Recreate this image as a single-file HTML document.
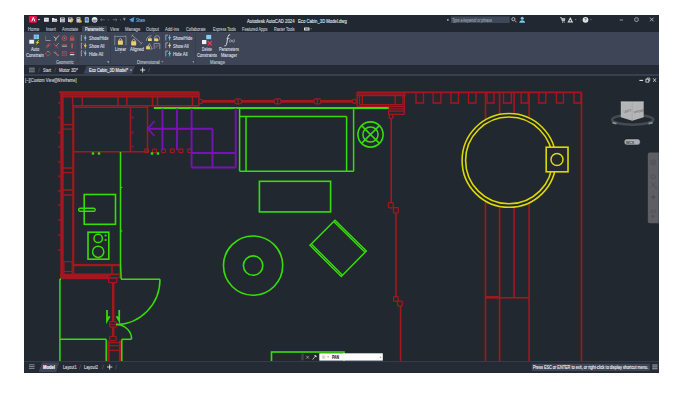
<!DOCTYPE html>
<html><head><meta charset="utf-8">
<style>
*{margin:0;padding:0;box-sizing:border-box}
html,body{width:680px;height:400px;background:#fff;overflow:hidden;font-family:"Liberation Sans",sans-serif}
.b{position:absolute}
.t{position:absolute;white-space:nowrap;line-height:1;transform-origin:0 0;-webkit-text-stroke:0.12px currentColor;font-family:"Liberation Sans",sans-serif}
svg{position:absolute;left:0;top:0;overflow:hidden}
</style></head><body>
<div class="b" style="left:24px;top:15px;width:635px;height:358px;background:#222832"></div>
<div class="b" style="left:24px;top:32px;width:635px;height:33px;background:#3d4556"></div>
<div class="b" style="left:82px;top:25.8px;width:25px;height:6.2px;background:#3c4454"></div>
<div class="b" style="left:24px;top:65px;width:635px;height:9px;background:#252b35"></div>
<div class="b" style="left:24px;top:74px;width:635px;height:1.8px;background:#384050"></div>
<div class="b" style="left:24px;top:75.8px;width:635px;height:285.2px;background:#212830"></div>
<div class="b" style="left:24px;top:361px;width:635px;height:1px;background:#343d4b"></div>
<div class="b" style="left:24px;top:362px;width:635px;height:11px;background:#252b35"></div>

<svg width="680" height="400" viewBox="0 0 680 400">
<defs><clipPath id="vpc"><rect x="24" y="75.2" width="635" height="285.8"/></clipPath></defs>
<g clip-path="url(#vpc)" stroke-linecap="butt">
<rect x="60.3" y="91.6" width="138.6" height="5.1" fill="#841a1f"/>
<line x1="59" y1="92" x2="199" y2="92" stroke="#a3181e" stroke-width="1.75"/>
<line x1="61" y1="94.2" x2="199" y2="94.2" stroke="#a3181e" stroke-width="1.25"/>
<line x1="61" y1="96.6" x2="199" y2="96.6" stroke="#a3181e" stroke-width="1.62"/>
<rect x="60.3" y="92" width="3.4" height="187" fill="#a3181e"/>
<rect x="72.2" y="106" width="2.1" height="158.5" fill="#a3181e"/>
<line x1="72.6" y1="96.6" x2="72.6" y2="106" stroke="#a3181e" stroke-width="1.50"/>
<line x1="82.3" y1="96.6" x2="82.3" y2="106" stroke="#a3181e" stroke-width="1.50"/>
<line x1="118" y1="96.6" x2="118" y2="106" stroke="#a3181e" stroke-width="1.50"/>
<line x1="126.8" y1="96.6" x2="126.8" y2="106" stroke="#a3181e" stroke-width="1.50"/>
<line x1="152.5" y1="96.6" x2="152.5" y2="106" stroke="#a3181e" stroke-width="1.50"/>
<line x1="157.5" y1="96.6" x2="157.5" y2="106" stroke="#a3181e" stroke-width="1.50"/>
<line x1="192.5" y1="96.6" x2="192.5" y2="106" stroke="#a3181e" stroke-width="1.50"/>
<line x1="199" y1="92" x2="199" y2="106" stroke="#a3181e" stroke-width="1.50"/>
<line x1="72.8" y1="105.8" x2="199" y2="105.8" stroke="#a3181e" stroke-width="1.50"/>
<line x1="74.4" y1="107.4" x2="147.5" y2="107.4" stroke="#a3181e" stroke-width="1.38"/>
<line x1="63" y1="124.6" x2="73.5" y2="124.6" stroke="#a3181e" stroke-width="1.38"/>
<line x1="63" y1="129.1" x2="73.5" y2="129.1" stroke="#a3181e" stroke-width="1.38"/>
<line x1="63" y1="168" x2="73.5" y2="168" stroke="#a3181e" stroke-width="1.38"/>
<line x1="63" y1="172.6" x2="73.5" y2="172.6" stroke="#a3181e" stroke-width="1.38"/>
<line x1="63" y1="190" x2="73.5" y2="190" stroke="#a3181e" stroke-width="1.38"/>
<line x1="63" y1="195" x2="73.5" y2="195" stroke="#a3181e" stroke-width="1.38"/>
<line x1="130.5" y1="107" x2="130.5" y2="152" stroke="#a3181e" stroke-width="1.50"/>
<line x1="147.5" y1="106" x2="147.5" y2="152" stroke="#a3181e" stroke-width="1.50"/>
<line x1="73.5" y1="151.7" x2="147.5" y2="151.7" stroke="#a3181e" stroke-width="1.50"/>
<rect x="144.6" y="149.2" width="4.0" height="3.4000000000000057" rx="0.8" fill="none" stroke="#a3181e" stroke-width="1.25"/>
<rect x="152.6" y="149.2" width="4.0" height="3.4000000000000057" rx="0.8" fill="none" stroke="#a3181e" stroke-width="1.25"/>
<rect x="161.5" y="149.2" width="4.0" height="3.4000000000000057" rx="0.8" fill="none" stroke="#a3181e" stroke-width="1.25"/>
<rect x="170.3" y="149.2" width="4.0" height="3.4000000000000057" rx="0.8" fill="none" stroke="#a3181e" stroke-width="1.25"/>
<rect x="178.9" y="149.2" width="4.0" height="3.4000000000000057" rx="0.8" fill="none" stroke="#a3181e" stroke-width="1.25"/>
<rect x="187.7" y="149.2" width="4.0" height="3.4000000000000057" rx="0.8" fill="none" stroke="#a3181e" stroke-width="1.25"/>
<rect x="58.7" y="102.4" width="1.2999999999999972" height="1.1999999999999886" rx="0" fill="none" stroke="#a3181e" stroke-width="0.75"/>
<rect x="58.7" y="116.9" width="1.2999999999999972" height="1.1999999999999886" rx="0" fill="none" stroke="#a3181e" stroke-width="0.75"/>
<rect x="58.7" y="131.9" width="1.2999999999999972" height="1.1999999999999886" rx="0" fill="none" stroke="#a3181e" stroke-width="0.75"/>
<rect x="58.7" y="146.1" width="1.2999999999999972" height="1.1999999999999886" rx="0" fill="none" stroke="#a3181e" stroke-width="0.75"/>
<rect x="58.7" y="161.20000000000002" width="1.2999999999999972" height="1.1999999999999886" rx="0" fill="none" stroke="#a3181e" stroke-width="0.75"/>
<rect x="58.7" y="175.8" width="1.2999999999999972" height="1.1999999999999886" rx="0" fill="none" stroke="#a3181e" stroke-width="0.75"/>
<rect x="58.7" y="190.4" width="1.2999999999999972" height="1.1999999999999886" rx="0" fill="none" stroke="#a3181e" stroke-width="0.75"/>
<rect x="58.7" y="204.4" width="1.2999999999999972" height="1.1999999999999886" rx="0" fill="none" stroke="#a3181e" stroke-width="0.75"/>
<rect x="58.7" y="219.4" width="1.2999999999999972" height="1.1999999999999886" rx="0" fill="none" stroke="#a3181e" stroke-width="0.75"/>
<rect x="58.7" y="234.4" width="1.2999999999999972" height="1.1999999999999886" rx="0" fill="none" stroke="#a3181e" stroke-width="0.75"/>
<rect x="58.7" y="249.4" width="1.2999999999999972" height="1.1999999999999886" rx="0" fill="none" stroke="#a3181e" stroke-width="0.75"/>
<rect x="132" y="116.9" width="1.1999999999999886" height="1.1999999999999886" rx="0" fill="none" stroke="#a3181e" stroke-width="0.75"/>
<rect x="132" y="131.9" width="1.1999999999999886" height="1.1999999999999886" rx="0" fill="none" stroke="#a3181e" stroke-width="0.75"/>
<rect x="132" y="145.9" width="1.1999999999999886" height="1.1999999999999886" rx="0" fill="none" stroke="#a3181e" stroke-width="0.75"/>
<rect x="72.2" y="263.9" width="48.5" height="2.3" fill="#a3181e"/>
<rect x="60.3" y="274.3" width="48.7" height="4.9" fill="#a3181e"/>
<line x1="73.5" y1="266" x2="73.5" y2="274.3" stroke="#a3181e" stroke-width="1.50"/>
<line x1="112" y1="266" x2="112" y2="274.3" stroke="#a3181e" stroke-width="1.50"/>
<line x1="120.1" y1="264" x2="120.1" y2="278" stroke="#a3181e" stroke-width="1.88"/>
<line x1="73.5" y1="274.2" x2="120.1" y2="274.2" stroke="#a3181e" stroke-width="1.50"/>
<rect x="110" y="274.8" width="10.099999999999994" height="2.8000000000000114" rx="0" fill="none" stroke="#a3181e" stroke-width="1.12"/>
<rect x="64" y="261.7" width="8.200000000000003" height="12.600000000000023" rx="0" fill="none" stroke="#a3181e" stroke-width="1.12"/>
<line x1="64" y1="271.5" x2="72.2" y2="271.5" stroke="#a3181e" stroke-width="1.12"/>
<rect x="108.6" y="278" width="8.100000000000009" height="4.600000000000023" rx="1" fill="none" stroke="#a3181e" stroke-width="1.25"/>
<line x1="113.2" y1="282.6" x2="113.2" y2="321.7" stroke="#a3181e" stroke-width="2.50"/>
<rect x="109.6" y="321.7" width="6.700000000000003" height="5.400000000000034" rx="1.2" fill="none" stroke="#a3181e" stroke-width="1.25"/>
<line x1="109.6" y1="324.4" x2="116.3" y2="324.4" stroke="#a3181e" stroke-width="1.00"/>
<line x1="113.2" y1="327.1" x2="113.2" y2="336.4" stroke="#a3181e" stroke-width="2.50"/>
<rect x="109.6" y="336.4" width="6.700000000000003" height="4.2000000000000455" rx="1.2" fill="none" stroke="#a3181e" stroke-width="1.25"/>
<line x1="108.5" y1="340.6" x2="108.5" y2="361" stroke="#a3181e" stroke-width="2.50"/>
<line x1="120" y1="340.6" x2="120" y2="361" stroke="#a3181e" stroke-width="2.12"/>
<line x1="108.5" y1="342.6" x2="120" y2="342.6" stroke="#a3181e" stroke-width="1.38"/>
<line x1="108.5" y1="345.7" x2="120" y2="345.7" stroke="#a3181e" stroke-width="1.25"/>
<line x1="108.5" y1="350.4" x2="120" y2="350.4" stroke="#a3181e" stroke-width="1.38"/>
<line x1="201" y1="101.4" x2="354" y2="101.4" stroke="#a3181e" stroke-width="2.62"/>
<rect x="234.7" y="98.9" width="6.800000000000011" height="4.8999999999999915" rx="1.8" fill="#212830" stroke="#a3181e" stroke-width="1.25"/>
<line x1="238.1" y1="98.9" x2="238.1" y2="103.8" stroke="#a3181e" stroke-width="1.38"/>
<rect x="274.20000000000005" y="98.9" width="6.7999999999999545" height="4.8999999999999915" rx="1.8" fill="#212830" stroke="#a3181e" stroke-width="1.25"/>
<line x1="277.6" y1="98.9" x2="277.6" y2="103.8" stroke="#a3181e" stroke-width="1.38"/>
<rect x="314.0" y="98.9" width="6.7999999999999545" height="4.8999999999999915" rx="1.8" fill="#212830" stroke="#a3181e" stroke-width="1.25"/>
<line x1="317.4" y1="98.9" x2="317.4" y2="103.8" stroke="#a3181e" stroke-width="1.38"/>
<circle cx="200.6" cy="101.4" r="2.0" fill="#212830" stroke="#a3181e" stroke-width="1.25"/>
<rect x="357" y="92" width="48.5" height="3.8" fill="#841a1f"/>
<line x1="357" y1="92.2" x2="405.7" y2="92.2" stroke="#a3181e" stroke-width="1.62"/>
<line x1="357" y1="95.6" x2="405.7" y2="95.6" stroke="#a3181e" stroke-width="1.50"/>
<line x1="357.1" y1="92" x2="357.1" y2="106.5" stroke="#a3181e" stroke-width="1.50"/>
<line x1="359.5" y1="95.6" x2="359.5" y2="104.6" stroke="#a3181e" stroke-width="1.25"/>
<line x1="362.4" y1="95.6" x2="362.4" y2="104.6" stroke="#a3181e" stroke-width="1.38"/>
<line x1="395.2" y1="95.6" x2="395.2" y2="104.6" stroke="#a3181e" stroke-width="1.38"/>
<line x1="402.9" y1="95.6" x2="402.9" y2="104.6" stroke="#a3181e" stroke-width="1.25"/>
<line x1="359.5" y1="104.6" x2="402.9" y2="104.6" stroke="#a3181e" stroke-width="1.25"/>
<line x1="404.3" y1="92" x2="404.3" y2="114.4" stroke="#a3181e" stroke-width="1.50"/>
<line x1="357.1" y1="106.5" x2="404.3" y2="106.5" stroke="#a3181e" stroke-width="1.50"/>
<line x1="388.6" y1="106.5" x2="388.6" y2="114.4" stroke="#a3181e" stroke-width="1.38"/>
<line x1="388.6" y1="108.9" x2="404.3" y2="108.9" stroke="#a3181e" stroke-width="1.25"/>
<line x1="388.6" y1="111.2" x2="404.3" y2="111.2" stroke="#a3181e" stroke-width="1.25"/>
<line x1="388.6" y1="114.4" x2="404.3" y2="114.4" stroke="#a3181e" stroke-width="1.25"/>
<path d="M389.2,114.4 L389.2,116.8 Q389.2,118.9 391.2,118.9 Q393,118.9 393,116.8 L393,114.4" fill="none" stroke="#a3181e" stroke-width="1.25"/>
<circle cx="354.3" cy="101.3" r="2.0" fill="#212830" stroke="#a3181e" stroke-width="1.25"/>
<line x1="391.2" y1="119" x2="391.2" y2="202.5" stroke="#a3181e" stroke-width="1.62"/>
<rect x="388.5" y="202.5" width="4.800000000000011" height="5.300000000000011" rx="0.8" fill="none" stroke="#a3181e" stroke-width="1.25"/>
<rect x="393.5" y="207.5" width="4.800000000000011" height="5.5" rx="0.8" fill="none" stroke="#a3181e" stroke-width="1.25"/>
<line x1="396" y1="213" x2="396" y2="296.6" stroke="#a3181e" stroke-width="1.62"/>
<rect x="393.6" y="296.6" width="4.599999999999966" height="4.699999999999989" rx="0.8" fill="none" stroke="#a3181e" stroke-width="1.25"/>
<rect x="397.6" y="301" width="4.699999999999989" height="5" rx="0.8" fill="none" stroke="#a3181e" stroke-width="1.25"/>
<line x1="400.6" y1="306" x2="400.6" y2="361" stroke="#a3181e" stroke-width="1.62"/>
<line x1="404.4" y1="92.4" x2="581.5" y2="92.4" stroke="#a3181e" stroke-width="1.62"/>
<polyline points="416,92.4 416,103 423.5,103 423.5,92.4" fill="none" stroke="#a3181e" stroke-width="1.38"/>
<polyline points="433.2,92.4 433.2,103 440.9,103 440.9,92.4" fill="none" stroke="#a3181e" stroke-width="1.38"/>
<polyline points="450.9,92.4 450.9,103 458.5,103 458.5,92.4" fill="none" stroke="#a3181e" stroke-width="1.38"/>
<polyline points="468.5,92.4 468.5,103 476,103 476,92.4" fill="none" stroke="#a3181e" stroke-width="1.38"/>
<polyline points="487,92.4 487,103 494,103 494,92.4" fill="none" stroke="#a3181e" stroke-width="1.38"/>
<polyline points="503.5,92.4 503.5,103 511.4,103 511.4,92.4" fill="none" stroke="#a3181e" stroke-width="1.38"/>
<polyline points="521.1,92.4 521.1,103 528.2,103 528.2,92.4" fill="none" stroke="#a3181e" stroke-width="1.38"/>
<polyline points="538.8,92.4 538.8,103 545.8,103 545.8,92.4" fill="none" stroke="#a3181e" stroke-width="1.38"/>
<polyline points="556.4,92.4 556.4,103 563.5,103 563.5,92.4" fill="none" stroke="#a3181e" stroke-width="1.38"/>
<polyline points="574,92.4 574,103 581,103 581,92.4" fill="none" stroke="#a3181e" stroke-width="1.38"/>
<line x1="581.5" y1="92.4" x2="581.5" y2="361" stroke="#a3181e" stroke-width="1.62"/>
<line x1="485.5" y1="92.4" x2="485.5" y2="119.81231713930939" stroke="#a3181e" stroke-width="1.62"/>
<line x1="485.5" y1="200.98768286069063" x2="485.5" y2="361" stroke="#a3181e" stroke-width="1.62"/>
<line x1="499.6" y1="92.4" x2="499.6" y2="114.45165944236942" stroke="#a3181e" stroke-width="1.62"/>
<line x1="499.6" y1="206.3483405576306" x2="499.6" y2="361" stroke="#a3181e" stroke-width="1.62"/>
<line x1="514.1" y1="92.4" x2="514.1" y2="113.7781167261553" stroke="#a3181e" stroke-width="1.62"/>
<line x1="514.1" y1="207.0218832738447" x2="514.1" y2="297.7" stroke="#a3181e" stroke-width="1.62"/>
<line x1="529.1" y1="92.4" x2="529.1" y2="118.02547935374373" stroke="#a3181e" stroke-width="1.62"/>
<line x1="529.1" y1="202.7745206462563" x2="529.1" y2="361" stroke="#a3181e" stroke-width="1.62"/>
<line x1="485.5" y1="297.7" x2="529.1" y2="297.7" stroke="#a3181e" stroke-width="1.50"/>
<line x1="485.5" y1="297.2" x2="499.6" y2="297.2" stroke="#a3181e" stroke-width="2.25"/>
<line x1="153.8" y1="108" x2="388.6" y2="108" stroke="#38dc08" stroke-width="2.00"/>
<line x1="239.6" y1="108" x2="239.6" y2="171.3" stroke="#38dc08" stroke-width="1.50"/>
<line x1="353.6" y1="108" x2="353.6" y2="171.3" stroke="#38dc08" stroke-width="1.50"/>
<line x1="239.6" y1="171.3" x2="353.6" y2="171.3" stroke="#38dc08" stroke-width="1.50"/>
<line x1="239.6" y1="116.5" x2="346.6" y2="116.5" stroke="#38dc08" stroke-width="1.50"/>
<line x1="246" y1="116.5" x2="246" y2="171.3" stroke="#38dc08" stroke-width="1.50"/>
<line x1="346.6" y1="116.5" x2="346.6" y2="171.3" stroke="#38dc08" stroke-width="1.50"/>
<circle cx="370.5" cy="134.5" r="12.6" fill="none" stroke="#38dc08" stroke-width="1.62"/>
<circle cx="370.5" cy="134.5" r="7.6" fill="none" stroke="#38dc08" stroke-width="1.50"/>
<line x1="361.6" y1="125.6" x2="379.4" y2="143.4" stroke="#38dc08" stroke-width="1.50"/>
<line x1="379.4" y1="125.6" x2="361.6" y2="143.4" stroke="#38dc08" stroke-width="1.50"/>
<rect x="259.4" y="181.3" width="71.20000000000005" height="30.599999999999994" rx="0" fill="none" stroke="#38dc08" stroke-width="1.62"/>
<circle cx="253.1" cy="265.6" r="29.6" fill="none" stroke="#38dc08" stroke-width="1.62"/>
<circle cx="253.1" cy="265.6" r="9.7" fill="none" stroke="#38dc08" stroke-width="1.62"/>
<polygon points="335,220.3 366.3,251 341.3,276.5 310,245.3" fill="none" stroke="#38dc08" stroke-width="1.50"/>
<line x1="333.7" y1="221.6" x2="365.0" y2="252.3" stroke="#38dc08" stroke-width="1.38"/>
<line x1="311.3" y1="244.0" x2="342.6" y2="275.2" stroke="#38dc08" stroke-width="1.38"/>
<rect x="84.2" y="194.5" width="31.299999999999997" height="29.80000000000001" rx="0" fill="none" stroke="#38dc08" stroke-width="1.62"/>
<rect x="78.6" y="208.3" width="16.60000000000001" height="3.0" rx="1.5" fill="none" stroke="#38dc08" stroke-width="1.38"/>
<rect x="88" y="232.2" width="20.799999999999997" height="27.0" rx="0" fill="none" stroke="#38dc08" stroke-width="1.62"/>
<circle cx="98.2" cy="238.4" r="4.2" fill="none" stroke="#38dc08" stroke-width="1.50"/>
<circle cx="98.2" cy="251.8" r="5.6" fill="none" stroke="#38dc08" stroke-width="1.50"/>
<circle cx="105.6" cy="235.5" r="1.1" fill="#38dc08" stroke="#38dc08" stroke-width="0.00"/>
<circle cx="105.6" cy="240" r="1.1" fill="#38dc08" stroke="#38dc08" stroke-width="0.00"/>
<polyline points="120.5,152 120.5,263.2 121.2,279.3" fill="none" stroke="#38dc08" stroke-width="1.50"/>
<circle cx="121.6" cy="187.5" r="0.8" fill="#38dc08" stroke="#38dc08" stroke-width="0.00"/>
<circle cx="121.6" cy="231" r="0.8" fill="#38dc08" stroke="#38dc08" stroke-width="0.00"/>
<line x1="121" y1="279.3" x2="160" y2="279.3" stroke="#38dc08" stroke-width="1.50"/>
<path d="M160,279.2 A44,45.3 0 0 1 116,324.5" fill="none" stroke="#38dc08" stroke-width="1.50"/>
<path d="M116,324.5 A15.6,14.5 0 0 1 131.6,339" fill="none" stroke="#38dc08" stroke-width="1.50"/>
<line x1="59.9" y1="279" x2="59.9" y2="361" stroke="#38dc08" stroke-width="1.50"/>
<line x1="59.9" y1="279" x2="61" y2="279" stroke="#38dc08" stroke-width="1.50"/>
<line x1="59.9" y1="339.3" x2="106.2" y2="339.3" stroke="#38dc08" stroke-width="1.50"/>
<line x1="121.8" y1="339.3" x2="131.6" y2="339.3" stroke="#38dc08" stroke-width="1.50"/>
<line x1="106.2" y1="339.3" x2="106.2" y2="361" stroke="#38dc08" stroke-width="1.50"/>
<line x1="121.8" y1="339.3" x2="121.8" y2="361" stroke="#38dc08" stroke-width="1.50"/>
<path d="M107,310 L107,320.8 L109.6,316.2" fill="none" stroke="#38dc08" stroke-width="1.75"/>
<path d="M119.2,310 L119.2,320.8 L116.6,316.2" fill="none" stroke="#38dc08" stroke-width="1.75"/>
<rect x="91.8" y="152.3" width="2.4000000000000057" height="2.3999999999999773" rx="0" fill="#38dc08" stroke="#38dc08" stroke-width="0.00"/>
<rect x="97.8" y="152.3" width="2.4000000000000057" height="2.3999999999999773" rx="0" fill="#38dc08" stroke="#38dc08" stroke-width="0.00"/>
<rect x="150.8" y="152.3" width="2.3999999999999773" height="2.3999999999999773" rx="0" fill="#38dc08" stroke="#38dc08" stroke-width="0.00"/>
<rect x="156.8" y="152.3" width="2.3999999999999773" height="2.3999999999999773" rx="0" fill="#38dc08" stroke="#38dc08" stroke-width="0.00"/>
<rect x="271.5" y="352" width="72.5" height="10" rx="0" fill="none" stroke="#38dc08" stroke-width="1.62"/>
<line x1="162.5" y1="108.6" x2="162.5" y2="150" stroke="#7a10b8" stroke-width="1.88"/>
<line x1="177" y1="108.6" x2="177" y2="150" stroke="#7a10b8" stroke-width="1.88"/>
<line x1="191.6" y1="108.6" x2="191.6" y2="150" stroke="#7a10b8" stroke-width="1.88"/>
<line x1="191.6" y1="150" x2="191.6" y2="167.5" stroke="#7a10b8" stroke-width="1.88"/>
<line x1="147.5" y1="128.7" x2="212.5" y2="128.7" stroke="#7a10b8" stroke-width="1.88"/>
<polyline points="154.5,121 147.8,128.7 154.5,136" fill="none" stroke="#7a10b8" stroke-width="1.62"/>
<line x1="212.5" y1="128.7" x2="212.5" y2="167.5" stroke="#7a10b8" stroke-width="1.88"/>
<line x1="191.6" y1="153" x2="235.7" y2="153" stroke="#7a10b8" stroke-width="1.88"/>
<line x1="191.6" y1="167.5" x2="235.7" y2="167.5" stroke="#7a10b8" stroke-width="1.88"/>
<line x1="235.7" y1="108.6" x2="235.7" y2="167.5" stroke="#7a10b8" stroke-width="1.88"/>
<circle cx="509" cy="160.4" r="46.9" fill="none" stroke="#dcd804" stroke-width="1.62"/>
<circle cx="509" cy="160.4" r="43.4" fill="none" stroke="#dcd804" stroke-width="1.62"/>
<rect x="546.2" y="147.2" width="21.799999999999955" height="24.600000000000023" rx="0" fill="#212830" stroke="#dcd804" stroke-width="1.62"/>
<circle cx="557" cy="159.5" r="6" fill="none" stroke="#dcd804" stroke-width="1.50"/>
</g>
<!-- ===== chrome icons ===== -->
<g id="icons">
<rect x="28.9" y="15.9" width="7.9" height="6.9" rx="0.8" fill="#ec1248"/>
<path d="M31.8,21.3 L33.3,17.4 L34.8,21.3" stroke="#fff" stroke-width="1.0" fill="none"/>
<path d="M38,19.6 L39.9,19.6" stroke="#dfe2e6" stroke-width="0.9"/>
<rect x="44" y="17.8" width="4.8" height="4" rx="0.5" fill="#e4e6ea"/><rect x="45" y="19.3" width="2.8" height="0.6" fill="#9aa0a8"/>
<path d="M52,18 L54,18 L54.6,18.8 L57,18.8 L57,22 L52,22 Z" fill="#e4e6ea"/><path d="M52.3,22 L53.3,20 L57.6,20 L56.8,22Z" fill="#b8bcc2"/>
<rect x="60" y="17.5" width="4.8" height="4.8" rx="0.4" fill="#d8dbe0"/><rect x="61" y="17.8" width="2.8" height="1.6" fill="#6a717c"/><rect x="61" y="20.3" width="2.8" height="1.6" fill="#9aa0a8"/>
<rect x="68" y="17.5" width="4.6" height="4.6" rx="0.4" fill="#d0d3d8"/><rect x="68.8" y="18" width="2.6" height="1.4" fill="#6a717c"/><path d="M70.5,22.6 L73.3,19.2" stroke="#e6b21c" stroke-width="1.2"/><path d="M70.4,22.6 L71.2,22.8" stroke="#d44" stroke-width="0.8"/>
<rect x="76.5" y="17.2" width="4" height="5.2" rx="0.3" fill="#c8ccd2"/><rect x="77.2" y="18" width="2.4" height="1" fill="#666d77"/><rect x="79" y="20.3" width="2.6" height="2.2" fill="#e3c22a"/>
<rect x="84.8" y="17.2" width="4" height="5.4" rx="0.6" fill="#d0d4da"/><rect x="85.4" y="18" width="2.8" height="3.4" fill="#3c8fd0"/>
<circle cx="94.6" cy="19.7" r="2.8" fill="#e8eaee"/><rect x="92.6" y="19.6" width="4" height="1.3" fill="#7a818b"/><rect x="93.1" y="21" width="3" height="0.9" fill="#57b0e6"/>
<path d="M100.5,19.7 L104.8,19.7 M100.5,19.7 L102,18.4 M100.5,19.7 L102,21" stroke="#6d7480" stroke-width="0.8" fill="none"/><circle cx="108.2" cy="19.8" r="0.5" fill="#8a919b"/>
<path d="M117,19.7 L112.7,19.7 M117,19.7 L115.5,18.4 M117,19.7 L115.5,21" stroke="#6d7480" stroke-width="0.8" fill="none"/><circle cx="120.3" cy="19.8" r="0.5" fill="#8a919b"/>
<path d="M123.3,18.6 L125.3,18.6 L124.3,20.4Z M123.4,17.9 L125.2,17.9" fill="#9aa1ab" stroke="#9aa1ab" stroke-width="0.4"/>
<path d="M129,19.8 L134.4,17 L133.4,22.6 L131.6,21.2 L130.6,22.3 L130.8,20.6 Z" fill="#4aa3e3"/>
<path d="M447.3,18.7 L449.2,19.9 L447.3,21.1Z" fill="#cfd3d8"/>
<rect x="451" y="16.4" width="58.7" height="6.6" fill="#3d4859"/>
<circle cx="513.4" cy="19.2" r="1.6" fill="none" stroke="#d5d8dd" stroke-width="0.8"/><path d="M514.6,20.4 L516.5,22.3" stroke="#c8a060" stroke-width="1.0"/>
<circle cx="522.2" cy="18.3" r="1.5" fill="#7cc8ee"/><path d="M519.3,22.8 Q519.5,20.3 522.2,20.3 Q524.9,20.3 525.1,22.8Z" fill="#7cc8ee"/>
<path d="M560.3,17.6 L561.4,17.6 L562.2,21 L564.4,21 L565,18.6 L561.8,18.6Z" stroke="#c7cbd1" stroke-width="0.7" fill="#aeb3ba"/><circle cx="562.5" cy="22.1" r="0.55" fill="#c7cbd1"/><circle cx="564.2" cy="22.1" r="0.55" fill="#c7cbd1"/>
<path d="M570.3,17 L573.2,22.4 L567.4,22.4Z" fill="#d4d7dc"/><circle cx="570.3" cy="20.7" r="0.8" fill="#222832"/><path d="M575,19.3 L576.4,19.3 L575.7,20.2Z" fill="#aeb3ba"/>
<rect x="580" y="17" width="0.5" height="5.5" fill="#3a414c"/>
<circle cx="585.5" cy="19.8" r="2.9" fill="#e3e5e9"/><text x="585.5" y="21.3" font-size="4" font-weight="bold" text-anchor="middle" fill="#333" font-family="Liberation Sans">?</text><path d="M590.3,19.3 L591.7,19.3 L591,20.2Z" fill="#aeb3ba"/>
<path d="M619.7,20 L623,20" stroke="#c7cbd1" stroke-width="0.7"/>
<rect x="634.8" y="17.9" width="3.4" height="3.4" rx="0.8" fill="none" stroke="#c7cbd1" stroke-width="0.7"/>
<path d="M650,17.7 L653.6,21.3 M653.6,17.7 L650,21.3" stroke="#c7cbd1" stroke-width="0.8"/>
<rect x="304" y="27.6" width="5.5" height="3" rx="0.3" fill="#dfe2e6"/><rect x="305" y="28.4" width="3.5" height="1.2" fill="#555c66"/><path d="M310.6,28.6 L311.8,28.6 L311.2,29.5Z" fill="#aeb3ba"/>
<rect x="33.7" y="34.6" width="5.3" height="4.5" fill="#86cdf2"/><path d="M36.35,34.6 V39.1 M33.7,36.85 H39" stroke="#3d8ec4" stroke-width="0.4"/>
<rect x="29.1" y="39.8" width="5" height="4.1" fill="#eef0f2"/><rect x="29.1" y="39.8" width="5" height="4.1" fill="none" stroke="#6b7380" stroke-width="0.4"/>
<path d="M38.6,40 L35.4,42.8 L37.2,42.8 L35.6,45.2 L39.4,41.9 L37.6,41.9 L39.2,40Z" fill="#f2d52b"/>
<path d="M45.7,35.6 V40.5" stroke="#b4544c" stroke-width="0.9"/><path d="M45.7,40.5 H50.7" stroke="#949ba5" stroke-width="0.9"/>
<path d="M53.7,36.7 L56.2,38.7 L58.900000000000006,35.6 M56.2,38.7 L55.2,40.7" stroke="#e3e5e9" stroke-width="0.8" fill="none"/><path d="M56.7,37.7 L58.900000000000006,35.6" stroke="#b4544c" stroke-width="0.8"/>
<circle cx="64.4" cy="38.2" r="2.3" fill="none" stroke="#b4544c" stroke-width="1"/><circle cx="64.4" cy="38.2" r="0.8" fill="#949ba5"/>
<rect x="69.89999999999999" y="37.6" width="4.4" height="3.2" fill="#b4544c"/><path d="M70.69999999999999,37.7 V36.6 Q72.1,34.900000000000006 73.5,36.6 V37.7" stroke="#b4544c" stroke-width="0.8" fill="none"/>
<path d="M45.5,47.2 L49.5,43.2 M46.5,48.2 L50.5,44.2" stroke="#b4544c" stroke-width="0.9"/><path d="M47.5,46.2 L48.5,45.2" stroke="#949ba5" stroke-width="0.9"/>
<path d="M53.6,43.7 L58.6,48.300000000000004" stroke="#b4544c" stroke-width="0.9"/><path d="M55.6,46.300000000000004 L58.800000000000004,43.1" stroke="#949ba5" stroke-width="0.9"/>
<rect x="61.800000000000004" y="44.400000000000006" width="5.2" height="1.6" fill="#b4544c"/><rect x="61.800000000000004" y="46.0" width="5.2" height="0.9" fill="#949ba5"/>
<rect x="71.3" y="43.1" width="1.6" height="5.2" fill="#b4544c"/>
<path d="M48,51.0 L50.6,53.6 L48,56.2 L45.4,53.6Z" stroke="#b4544c" stroke-width="0.9" fill="none"/><path d="M47,51.6 L49.4,51.800000000000004" stroke="#949ba5" stroke-width="0.6"/>
<path d="M53.6,52.0 L58.800000000000004,55.6" stroke="#949ba5" stroke-width="0.9"/><path d="M55.400000000000006,51.0 L57.400000000000006,56.2" stroke="#b4544c" stroke-width="0.8"/>
<rect x="62.2" y="51.4" width="4.4" height="4.4" fill="none" stroke="#b4544c" stroke-width="0.6"/><circle cx="64.4" cy="53.300000000000004" r="1" fill="none" stroke="#b4544c" stroke-width="0.6"/>
<rect x="69.89999999999999" y="52.0" width="4.4" height="1.1" fill="#b4544c"/><rect x="69.89999999999999" y="54.1" width="4.4" height="1.1" fill="#e3e5e9"/>
<rect x="77.8" y="34" width="0.5" height="29" fill="#323a47"/><rect x="110" y="33.5" width="0.5" height="30" fill="#323a47"/><rect x="162.4" y="33.5" width="0.5" height="25" fill="#323a47"/><rect x="195.3" y="33.5" width="0.5" height="30" fill="#323a47"/>
<path d="M107.2,61.3 L108.8,61.3 L108.8,62.9Z M107.3,61.4 L108.7,62.8" fill="#aab1bb" stroke="#aab1bb" stroke-width="0.3"/>
<path d="M192.4,61.3 L194,61.3 L194,62.9Z" fill="#aab1bb"/><path d="M161.3,61.3 L163.3,61.3 L162.3,62.5Z" fill="#aab1bb"/>
<path d="M82.1,35.4 H81.3 V40.6 H82.1" stroke="#d4d7dc" stroke-width="0.6" fill="none"/><path d="M82.89999999999999,35.6 L84.89999999999999,38.3" stroke="#d0564a" stroke-width="0.7"/><path d="M85.3,35.2 V40.8" stroke="#d4d7dc" stroke-width="0.6"/><path d="M85.3,36.7 L86.89999999999999,38 L85.3,39.3 L83.8,38Z" fill="#5cc6ee"/>
<path d="M82.1,43.1 H81.3 V48.300000000000004 H82.1" stroke="#d4d7dc" stroke-width="0.6" fill="none"/><path d="M82.89999999999999,43.300000000000004 L84.89999999999999,46.0" stroke="#d0564a" stroke-width="0.7"/><path d="M85.3,42.900000000000006 V48.5" stroke="#d4d7dc" stroke-width="0.6"/><path d="M85.3,44.400000000000006 L86.89999999999999,45.7 L85.3,47.0 L83.8,45.7Z" fill="#f2d52b"/>
<path d="M82.1,50.6 H81.3 V55.800000000000004 H82.1" stroke="#d4d7dc" stroke-width="0.6" fill="none"/><path d="M82.89999999999999,50.800000000000004 L84.89999999999999,53.5" stroke="#d0564a" stroke-width="0.7"/><path d="M85.3,50.400000000000006 V56.0" stroke="#d4d7dc" stroke-width="0.6"/><path d="M85.3,51.900000000000006 L86.89999999999999,53.2 L85.3,54.5 L83.8,53.2Z" fill="#39d5e8"/>
<path d="M168.0,35.1 H165.8 V40.5" stroke="#d4d7dc" stroke-width="0.6" fill="none"/><path d="M169.60000000000002,34.900000000000006 V40.5" stroke="#d4d7dc" stroke-width="0.6"/><path d="M169.60000000000002,36.400000000000006 L171.10000000000002,37.7 L169.60000000000002,39.0 L168.10000000000002,37.7Z" fill="#5cc6ee"/>
<path d="M168.0,42.8 H165.8 V48.199999999999996" stroke="#d4d7dc" stroke-width="0.6" fill="none"/><path d="M169.60000000000002,42.6 V48.199999999999996" stroke="#d4d7dc" stroke-width="0.6"/><path d="M169.60000000000002,44.1 L171.10000000000002,45.4 L169.60000000000002,46.699999999999996 L168.10000000000002,45.4Z" fill="#f2d52b"/>
<path d="M168.0,51.0 H165.8 V56.4" stroke="#d4d7dc" stroke-width="0.6" fill="none"/><path d="M169.60000000000002,50.800000000000004 V56.4" stroke="#d4d7dc" stroke-width="0.6"/><path d="M169.60000000000002,52.300000000000004 L171.10000000000002,53.6 L169.60000000000002,54.9 L168.10000000000002,53.6Z" fill="#39d5e8"/>
<path d="M114.8,35.6 V45.2 M126,35.6 V45.2 M114.8,36.4 H126" stroke="#a9b0ba" stroke-width="0.6" fill="none"/>
<rect x="117.9" y="40.6" width="5" height="4.2" rx="0.4" fill="#ecd070"/><path d="M119,40.7 V39.6 Q120.4,37.6 121.8,39.6 V40.7" stroke="#ecd070" stroke-width="0.8" fill="none"/>
<path d="M119.7,51.9 L121.3,51.9 L120.5,53Z" fill="#aab1bb"/>
<path d="M132.2,35.4 L141.4,43.4 M131.4,36.6 L133.2,34.4 M140.4,44.4 L142.3,42.3" stroke="#b9bfc7" stroke-width="0.6" fill="none"/>
<rect x="131.2" y="41.2" width="5" height="4.2" rx="0.4" fill="#ecd070"/><path d="M132.3,41.3 V40.2 Q133.7,38.2 135.1,40.2 V41.3" stroke="#ecd070" stroke-width="0.8" fill="none"/>
<path d="M146.3,40.8 Q146.6,36.2 151.6,35.7" stroke="#b9bfc7" stroke-width="0.6" fill="none"/><rect x="148" y="38.4" width="3.8" height="2.6" fill="#ecd070"/><path d="M148.6,38.5 Q149.9,36.8 151.2,38.5" stroke="#ecd070" stroke-width="0.6" fill="none"/>
<circle cx="157" cy="38.2" r="2.6" fill="none" stroke="#b9bfc7" stroke-width="0.6"/><rect x="154.2" y="38.6" width="3.8" height="2.6" fill="#ecd070"/><path d="M154.8,38.7 Q156.1,37 157.4,38.7" stroke="#ecd070" stroke-width="0.6" fill="none"/>
<path d="M149.5,43.5 L152.3,49 L146.5,49Z" stroke="#b9bfc7" stroke-width="0.6" fill="none"/><rect x="146.1" y="46.3" width="3.8" height="2.8" fill="#ecd070"/><path d="M146.7,46.4 Q148,44.7 149.3,46.4" stroke="#ecd070" stroke-width="0.6" fill="none"/>
<path d="M154.1,49 V43.6 H159.8 V49" stroke="#b9bfc7" stroke-width="0.6" fill="none"/><path d="M156,47.8 L158.6,45" stroke="#e04848" stroke-width="0.9"/><path d="M155.3,47 L157.2,45.2" stroke="#4aa3e3" stroke-width="0.7"/>
<rect x="206.2" y="34.9" width="5" height="4.3" fill="#86cdf2"/><rect x="202" y="40" width="4.4" height="4.1" fill="#eef0f2"/><path d="M207.7,41.2 L211.9,45.4 M211.9,41.2 L207.7,45.4" stroke="#f04646" stroke-width="1.1"/>
<path d="M230.2,34.8 Q228.6,34.2 228,36.6 L226.6,44.2 Q226,46.4 224.4,45.8" stroke="#dfe2e6" stroke-width="0.9" fill="none"/><path d="M226.4,38.6 H229.6" stroke="#dfe2e6" stroke-width="0.6"/>
<text x="229.2" y="41.6" font-size="5" font-style="italic" fill="#dfe2e6" font-family="Liberation Serif">(x)</text>
<path d="M29,68.2 H34.8 M29,70 H34.8 M29,71.8 H34.8" stroke="#c7cbd1" stroke-width="0.6"/>
<path d="M38.3,72.4 L40,67.6 M54.3,72.4 L56,67.6 M148.3,72.4 L150,67.6" stroke="#5b6370" stroke-width="0.5"/>
<path d="M83.5,73.8 L86.6,66 L135,66 L132,73.8Z" fill="#3d4556"/>
<path d="M130.1,69.1 L132,71 M132,69.1 L130.1,71" stroke="#a9b0ba" stroke-width="0.6"/>
<path d="M140.1,70 H145.2 M142.65,67.5 V72.5" stroke="#e0e3e7" stroke-width="0.9"/>
<path d="M639.4,80.4 H643.1" stroke="#dfe2e6" stroke-width="1.1"/>
<rect x="645.9" y="79.2" width="2.9" height="2.9" fill="none" stroke="#dfe2e6" stroke-width="0.8"/><path d="M647,79.1 V78 H649.8 V80.8 H648.8" stroke="#dfe2e6" stroke-width="0.7" fill="none"/>
<path d="M653.2,78.3 L656,81.9 M656,78.3 L653.2,81.9" stroke="#dfe2e6" stroke-width="0.8"/>
<ellipse cx="632.7" cy="119.8" rx="20.6" ry="4.9" fill="none" stroke="#454b53" stroke-width="2.6"/>
<path d="M612.5,122.6 L616.5,123.6 M648.5,123.6 L652.7,122.6" stroke="#8a9098" stroke-width="1.6"/>
<path d="M620.8,101.5 L643.7,101.5 L643.7,117.3 L632.2,120.7 L620.8,117.3Z" fill="#b4b5b7"/>
<path d="M632.2,102.3 L632.2,120.7" stroke="#98999c" stroke-width="0.5"/><path d="M620.8,102 L632.2,102.3 L643.7,102" stroke="#c9cacc" stroke-width="0.5" fill="none"/>
<text x="623.5" y="112.5" font-size="3.2" fill="#4d5056" font-family="Liberation Sans" transform="rotate(-8 625 111)">LEFT</text><text x="633.8" y="112.8" font-size="3.2" fill="#4d5056" font-family="Liberation Sans" transform="rotate(-12 637 111)">FRONT</text>
<rect x="624.2" y="138.9" width="16" height="6" rx="2.6" fill="#a9aeb5" stroke="#171b20" stroke-width="0.5"/>
<path d="M658.8,152.6 H649.8 Q647.8,152.6 647.8,154.6 V221.2 Q647.8,223.2 649.8,223.2 H658.8Z" fill="#5d5f64"/>
<circle cx="653.3" cy="162.5" r="2.6" fill="none" stroke="#474b51" stroke-width="0.7"/><circle cx="653.3" cy="162.5" r="1" fill="#474b51"/>
<circle cx="653.3" cy="169.5" r="0.4" fill="#474b51"/>
<path d="M651.2,178 Q651.2,174.5 653.3,174.3 Q655.4,174.5 655.4,178 Q653.3,179.5 651.2,178Z" fill="none" stroke="#474b51" stroke-width="0.7"/>
<path d="M651,182.5 L655.6,187.5 M655.6,182.5 L651,187.5" stroke="#474b51" stroke-width="0.8"/><circle cx="656" cy="188" r="0.8" fill="#474b51"/>
<circle cx="653.3" cy="192" r="0.4" fill="#474b51"/>
<path d="M650.8,197 H655.8 M653.3,194.5 V199.5" stroke="#474b51" stroke-width="0.8"/><circle cx="653.3" cy="197" r="1.3" fill="none" stroke="#474b51" stroke-width="0.5"/>
<circle cx="653.3" cy="204.5" r="0.4" fill="#474b51"/>
<rect x="651.2" y="210" width="4.2" height="2.6" fill="none" stroke="#474b51" stroke-width="0.5"/><path d="M652,214.8 L654.6,216.3 L652,217.8Z" fill="#474b51"/>
<path d="M29,364.8 H34.6 M29,366.6 H34.6 M29,368.4 H34.6" stroke="#c7cbd1" stroke-width="0.6"/>
<path d="M38.7,372 L42,362.6 L59.3,362.6 L56,372Z" fill="#3d4556"/>
<path d="M79.3,369.6 L80.8,364.6 M102.3,369.6 L103.8,364.6 M115.3,369.6 L116.8,364.6" stroke="#5b6370" stroke-width="0.5"/>
<path d="M107,367 H112.3 M109.65,364.4 V369.6" stroke="#e0e3e7" stroke-width="0.9"/>
<rect x="531.7" y="363.7" width="118.3" height="7.3" fill="#3d4556"/>
<path d="M652.2,365 H657.6 M652.2,366.9 H657.6 M652.2,368.8 H657.6" stroke="#c7cbd1" stroke-width="0.8"/>
<path d="M301.9,353.5 V360.3 M303.1,353.5 V360.3" stroke="#8c939c" stroke-width="0.35"/>
<path d="M306.3,355.8 L308.9,358.6 M308.9,355.8 L306.3,358.6" stroke="#c7cbd1" stroke-width="0.6"/>
<path d="M312.6,359.6 L315.4,356.2 M314.6,355.6 Q316.6,355 316.2,357 Z" stroke="#d4d7dc" stroke-width="0.8" fill="#d4d7dc"/>
<rect x="319.3" y="353.3" width="63.5" height="7.3" fill="#ffffff"/>
<circle cx="323.6" cy="357" r="2" fill="#d7dadd"/><path d="M327.3,356.4 L328.9,356.4 L328.1,357.6Z" fill="#333"/><path d="M380,357.7 L381.4,357.7 L380.7,356.5Z" fill="#555"/>
</g>
</svg>
<div class="t" style="left:246.50px;top:19.90px;font-size:4.600px;color:#dfe2e6;transform:scaleX(0.9374);">Autodesk AutoCAD 2024</div>
<div class="t" style="left:298.30px;top:19.90px;font-size:4.600px;color:#dfe2e6;transform:scaleX(0.9176);">Eco Cabin_3D Model.dwg</div>
<div class="t" style="left:136.20px;top:18.70px;font-size:4.800px;color:#62b4f0;transform:scaleX(0.7261);">Share</div>
<div class="t" style="left:452.00px;top:19.40px;font-size:4.600px;color:#9aa2ae;transform:scaleX(0.7571);font-style:italic;">Type a keyword or phrase</div>
<div class="t" style="left:28.00px;top:28.30px;font-size:4.600px;color:#bcc2cb;transform:scaleX(0.9291);">Home</div>
<div class="t" style="left:45.80px;top:28.30px;font-size:4.600px;color:#bcc2cb;transform:scaleX(0.8519);">Insert</div>
<div class="t" style="left:62.00px;top:28.30px;font-size:4.600px;color:#bcc2cb;transform:scaleX(0.8797);">Annotate</div>
<div class="t" style="left:109.80px;top:28.30px;font-size:4.600px;color:#bcc2cb;transform:scaleX(0.9002);">View</div>
<div class="t" style="left:124.90px;top:28.30px;font-size:4.600px;color:#bcc2cb;transform:scaleX(0.9205);">Manage</div>
<div class="t" style="left:145.90px;top:28.30px;font-size:4.600px;color:#bcc2cb;transform:scaleX(0.9342);">Output</div>
<div class="t" style="left:165.00px;top:28.30px;font-size:4.600px;color:#bcc2cb;transform:scaleX(0.8977);">Add-ins</div>
<div class="t" style="left:186.00px;top:28.30px;font-size:4.600px;color:#bcc2cb;transform:scaleX(0.8417);">Collaborate</div>
<div class="t" style="left:212.80px;top:28.30px;font-size:4.600px;color:#bcc2cb;transform:scaleX(0.8021);">Express Tools</div>
<div class="t" style="left:241.90px;top:28.30px;font-size:4.600px;color:#bcc2cb;transform:scaleX(0.8490);">Featured Apps</div>
<div class="t" style="left:273.80px;top:28.30px;font-size:4.600px;color:#bcc2cb;transform:scaleX(0.8124);">Raster Tools</div>
<div class="t" style="left:85.20px;top:28.30px;font-size:4.600px;color:#eef0f3;transform:scaleX(0.8499);">Parametric</div>
<div class="t" style="left:30.90px;top:48.20px;font-size:4.600px;color:#dadde2;transform:scaleX(0.8560);">Auto</div>
<div class="t" style="left:25.80px;top:53.50px;font-size:4.600px;color:#dadde2;transform:scaleX(0.9042);">Constrain</div>
<div class="t" style="left:56.20px;top:61.00px;font-size:4.600px;color:#b9c0c9;transform:scaleX(0.8343);">Geometric</div>
<div class="t" style="left:88.60px;top:37.40px;font-size:4.600px;color:#dadde2;transform:scaleX(0.8721);">Show/Hide</div>
<div class="t" style="left:88.60px;top:45.10px;font-size:4.600px;color:#dadde2;transform:scaleX(0.8729);">Show All</div>
<div class="t" style="left:88.60px;top:52.60px;font-size:4.600px;color:#dadde2;transform:scaleX(0.9040);">Hide All</div>
<div class="t" style="left:114.90px;top:48.40px;font-size:4.600px;color:#dadde2;transform:scaleX(0.8760);">Linear</div>
<div class="t" style="left:130.10px;top:48.40px;font-size:4.600px;color:#dadde2;transform:scaleX(0.9059);">Aligned</div>
<div class="t" style="left:137.30px;top:61.30px;font-size:4.600px;color:#b9c0c9;transform:scaleX(0.8969);">Dimensional</div>
<div class="t" style="left:173.40px;top:37.10px;font-size:4.600px;color:#dadde2;transform:scaleX(0.8811);">Show/Hide</div>
<div class="t" style="left:173.40px;top:44.80px;font-size:4.600px;color:#dadde2;transform:scaleX(0.8842);">Show All</div>
<div class="t" style="left:173.40px;top:53.00px;font-size:4.600px;color:#dadde2;transform:scaleX(0.9361);">Hide All</div>
<div class="t" style="left:202.00px;top:48.40px;font-size:4.600px;color:#dadde2;transform:scaleX(0.7521);">Delete</div>
<div class="t" style="left:197.00px;top:53.60px;font-size:4.600px;color:#dadde2;transform:scaleX(0.8597);">Constraints</div>
<div class="t" style="left:219.00px;top:48.40px;font-size:4.600px;color:#dadde2;transform:scaleX(0.8413);">Parameters</div>
<div class="t" style="left:221.00px;top:53.60px;font-size:4.600px;color:#dadde2;transform:scaleX(0.8814);">Manager</div>
<div class="t" style="left:210.00px;top:61.40px;font-size:4.600px;color:#b9c0c9;transform:scaleX(0.9024);">Manage</div>
<div class="t" style="left:43.00px;top:68.80px;font-size:4.600px;color:#d4d8de;transform:scaleX(0.8236);">Start</div>
<div class="t" style="left:59.00px;top:68.80px;font-size:4.600px;color:#d4d8de;transform:scaleX(0.9176);">Motor 3D*</div>
<div class="t" style="left:89.00px;top:68.80px;font-size:4.600px;color:#f2f3f5;transform:scaleX(0.8617);">Eco Cabin_3D Model*</div>
<div class="t" style="left:25.30px;top:78.70px;font-size:4.600px;color:#cdd1d6;transform:scaleX(0.8826);">[−][Custom View][Wireframe]</div>
<div class="t" style="left:43.00px;top:365.80px;font-size:4.600px;color:#ffffff;transform:scaleX(0.9032);font-weight:bold;">Model</div>
<div class="t" style="left:62.50px;top:365.80px;font-size:4.600px;color:#d4d8de;transform:scaleX(0.8248);">Layout1</div>
<div class="t" style="left:84.00px;top:365.80px;font-size:4.600px;color:#d4d8de;transform:scaleX(0.8553);">Layout2</div>
<div class="t" style="left:533.00px;top:366.05px;font-size:4.900px;color:#f2f3f5;transform:scaleX(0.7855);">Press ESC or ENTER to exit, or right-click to display shortcut menu.</div>
<div class="t" style="left:332.00px;top:356.20px;font-size:4.600px;color:#222222;transform:scaleX(0.7470);font-weight:bold;">PAN</div>
<div class="t" style="left:626.20px;top:141.70px;font-size:3.800px;color:#3e4248;transform:scaleX(0.9023);">WCS</div>
</body></html>
